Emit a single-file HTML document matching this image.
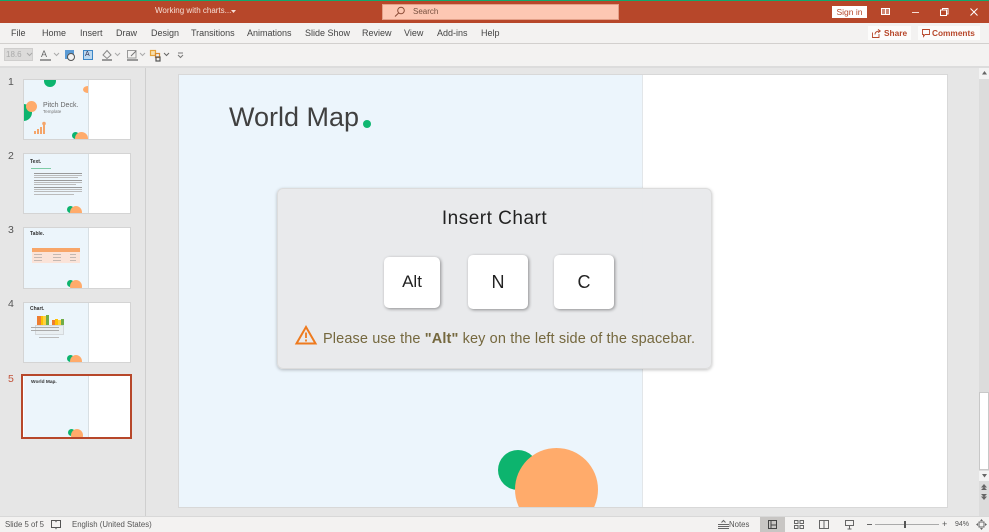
<!DOCTYPE html>
<html><head><meta charset="utf-8"><style>
*{box-sizing:border-box}
html,body{margin:0;padding:0}
body{width:989px;height:532px;position:relative;overflow:hidden;background:#e6e6e6;font-family:"Liberation Sans",sans-serif}
.a{position:absolute}
.t{position:absolute;white-space:nowrap;font-size:9px;color:#444;line-height:12px}
.thumb{position:absolute;left:23px;width:108px;background:#fff;border:1px solid #d4d4d4;overflow:hidden}
.thumb .bl{position:absolute;left:0;top:0;width:65px;height:100%;background:#ecf5fb;border-right:1px solid #d8dfe3;overflow:hidden}
.c{position:absolute;border-radius:50%}
.n{position:absolute;left:8px;font-size:10.5px;color:#555;line-height:12px}
.key{position:absolute;background:#fff;border-radius:5px;box-shadow:1px 1px 3px rgba(0,0,0,.4);text-align:center;color:#222;font-size:18px}
svg{position:absolute;overflow:visible}
</style></head><body>
<div class="a" style="left:0;top:0;width:989px;height:1px;background:#10a96c"></div>
<div class="a" style="left:0;top:1px;width:989px;height:22px;background:#b7472a"></div>
<div class="t" style="left:155px;top:5px;color:#f6ddd5;font-size:8px">Working with charts...</div>
<svg style="left:231px;top:10px" width="6" height="4"><path d="M0 0H5L2.500 3Z" fill="#f6ddd5"/></svg>
<div class="a" style="left:382px;top:4px;width:237px;height:16px;background:#fdc7b3;border:1px solid #e39f88"></div>
<svg style="left:394px;top:6px" width="12" height="12" fill="none" stroke="#8a4a35" stroke-width="1"><circle cx="7" cy="4.500" r="3.300"/><path d="M4.600 7L1 10.500"/></svg>
<div class="t" style="left:413px;top:6px;color:#77503f;font-size:8px">Search</div>
<div class="a" style="left:832px;top:6px;width:35px;height:12px;background:#fff;color:#b7472a;font-size:8.500px;line-height:12px;text-align:center">Sign in</div>
<svg style="left:881px;top:8px" width="10" height="8" fill="none" stroke="#fff"><rect x=".5" y=".5" width="8" height="6" fill="#fff" fill-opacity=".35"/><path d="M4.500 1V7" /></svg>
<div class="a" style="left:912px;top:12px;width:7px;height:1px;background:#f6ddd5"></div>
<svg style="left:940px;top:8px" width="9" height="8" fill="none" stroke="#fff"><rect x=".5" y="2" width="6" height="5.500"/><path d="M2.500 2V.5H8V6H6.500"/></svg>
<svg style="left:970px;top:8px" width="8" height="8" stroke="#fff"><path d="M.5 .5L7.500 7.500M7.500 .5L.5 7.500"/></svg>

<div class="a" style="left:0;top:23px;width:989px;height:44px;background:#f3f2f1"></div>
<div class="a" style="left:0;top:43px;width:989px;height:1px;background:#d2d0ce"></div>
<div class="a" style="left:0;top:66px;width:989px;height:2px;background:#dcdcdc"></div>
<div class="t" style="left:11px;top:27px">File</div>
<div class="t" style="left:42px;top:27px">Home</div>
<div class="t" style="left:80px;top:27px">Insert</div>
<div class="t" style="left:116px;top:27px">Draw</div>
<div class="t" style="left:151px;top:27px">Design</div>
<div class="t" style="left:191px;top:27px">Transitions</div>
<div class="t" style="left:247px;top:27px">Animations</div>
<div class="t" style="left:305px;top:27px">Slide Show</div>
<div class="t" style="left:362px;top:27px">Review</div>
<div class="t" style="left:404px;top:27px">View</div>
<div class="t" style="left:437px;top:27px">Add-ins</div>
<div class="t" style="left:481px;top:27px">Help</div>

<div class="a" style="left:868px;top:26px;width:43px;height:14px;background:#fcfcfb"></div>
<svg style="left:872px;top:29px" width="9" height="9" fill="none" stroke="#b7472a" stroke-width=".9"><path d="M.5 3.500V8.500H7V5M3 5.500C3 3 5 2 8 2M6 .3L8.300 2L6 3.800"/></svg>
<div class="t" style="left:884px;top:27px;color:#b7472a;font-weight:bold;font-size:8.300px">Share</div>
<div class="a" style="left:918px;top:26px;width:62px;height:14px;background:#fcfcfb"></div>
<svg style="left:922px;top:29px" width="9" height="9" fill="none" stroke="#b7472a" stroke-width=".9"><path d="M.5 .5H7.500V5.500H3L1.500 7.500V5.500H.5Z"/></svg>
<div class="t" style="left:932px;top:27px;color:#b7472a;font-weight:bold;font-size:8.300px">Comments</div>

<div class="a" style="left:4px;top:48px;width:29px;height:13px;background:#dcdbda;border:1px solid #cfcecd"></div>
<div class="t" style="left:6px;top:49px;color:#aaa;font-size:8px">18.6</div>
<svg style="left:27px;top:53px" width="5" height="3"><path d="M0 0L2.500 2.500L5 0" fill="none" stroke="#aaa"/></svg>
<div class="t" style="left:41px;top:48px;font-size:9px;color:#666">A</div>
<div class="a" style="left:40px;top:59px;width:11px;height:2px;background:#999"></div>
<svg style="left:54px;top:53px" width="5" height="3"><path d="M0 0L2.500 2.500L5 0" fill="none" stroke="#aaa"/></svg>
<div class="a" style="left:65px;top:50px;width:9px;height:9px;background:#5b9bd5"></div>
<div class="a" style="left:67px;top:53px;width:8px;height:8px;border-radius:50%;background:#f3f2f1;border:1px solid #555"></div>
<div class="a" style="left:83px;top:50px;width:10px;height:10px;background:#bcd8ef;border:1.500px solid #3c86c6"></div>
<div class="t" style="left:85px;top:49px;font-size:7px;color:#335">A</div>
<svg style="left:102px;top:50px" width="10" height="11"><path d="M5 .5L9 5L5 8.500L1 5Z" fill="none" stroke="#888"/><rect y="9" width="10" height="2" fill="#999"/></svg>
<svg style="left:115px;top:53px" width="5" height="3"><path d="M0 0L2.500 2.500L5 0" fill="none" stroke="#aaa"/></svg>
<svg style="left:127px;top:50px" width="11" height="11"><path d="M.5 .5H9V8H.5Z" fill="none" stroke="#999"/><path d="M4 6L9 1" stroke="#777"/><rect y="9" width="11" height="2" fill="#999"/></svg>
<svg style="left:140px;top:53px" width="5" height="3"><path d="M0 0L2.500 2.500L5 0" fill="none" stroke="#aaa"/></svg>
<svg style="left:150px;top:50px" width="11" height="11" fill="none" stroke-width="1.200"><rect x=".5" y=".5" width="5" height="5" stroke="#e5a33a" fill="#f7dfae"/><rect x="5.500" y="3.500" width="4" height="4" stroke="#d98a2c"/><rect x="6" y="7" width="4" height="4" stroke="#555"/></svg>
<svg style="left:164px;top:53px" width="5" height="3"><path d="M0 0L2.500 2.500L5 0" fill="none" stroke="#666"/></svg>
<svg style="left:178px;top:53px" width="5" height="5"><path d="M0 0H5M0 2L2.500 4.500L5 2" fill="none" stroke="#777"/></svg>

<div class="a" style="left:145px;top:68px;width:1px;height:448px;background:#cfcfcf"></div>

<div class="n" style="left:8px;top:76px">1</div>
<div class="thumb" style="top:79px;height:61px"><div class="bl">
<div class="c" style="left:20px;top:-5px;width:12px;height:12px;background:#0db46e"></div>
<div class="c" style="left:59px;top:6px;width:10px;height:7px;background:#ffab6b"></div>
<div class="c" style="left:-9px;top:24px;width:17px;height:17px;background:#0db46e"></div>
<div class="c" style="left:2px;top:21px;width:11px;height:11px;background:#ffab6b"></div>
<div class="t" style="left:19px;top:21px;font-size:7px;line-height:9px;color:#666">Pitch Deck.</div>
<div class="t" style="left:19px;top:29px;font-size:4.500px;line-height:6px;color:#777">Template</div>
<svg style="left:10px;top:42px" width="12" height="13" fill="#f4a56a"><rect y="9" width="2" height="3"/><rect x="3" y="7" width="2" height="5"/><rect x="6" y="5" width="2" height="7"/><rect x="9" y="3" width="2" height="9"/><circle cx="10" cy="1.500" r="1.800"/></svg>
<div class="c" style="left:48px;top:52px;width:7px;height:7px;background:#0db46e"></div>
<div class="c" style="left:51px;top:52px;width:13px;height:13px;background:#ffab6b"></div>
</div></div>

<div class="n" style="left:8px;top:150px">2</div>
<div class="thumb" style="top:153px;height:61px"><div class="bl">
<div class="t" style="left:6px;top:2px;font-size:5px;font-weight:bold;color:#333">Text.</div>
<div class="a" style="left:7px;top:14px;width:20px;height:1px;background:#7dcba6"></div>
<div class="a" style="left:10px;top:19px;width:48px;height:1px;background:#999"></div>
<div class="a" style="left:10px;top:21px;width:48px;height:1px;background:#bbb"></div>
<div class="a" style="left:10px;top:23px;width:44px;height:1px;background:#bbb"></div>
<div class="a" style="left:10px;top:26px;width:48px;height:1px;background:#999"></div>
<div class="a" style="left:10px;top:28px;width:48px;height:1px;background:#bbb"></div>
<div class="a" style="left:10px;top:30px;width:42px;height:1px;background:#bbb"></div>
<div class="a" style="left:10px;top:33px;width:48px;height:1px;background:#999"></div>
<div class="a" style="left:10px;top:35px;width:48px;height:1px;background:#bbb"></div>
<div class="a" style="left:10px;top:37px;width:48px;height:1px;background:#bbb"></div>
<div class="a" style="left:10px;top:40px;width:40px;height:1px;background:#bbb"></div>
<div class="c" style="left:43px;top:52px;width:7px;height:7px;background:#0db46e"></div>
<div class="c" style="left:46px;top:52px;width:12px;height:13px;background:#ffab6b"></div>
</div></div>

<div class="n" style="left:8px;top:224px">3</div>
<div class="thumb" style="top:227px;height:62px"><div class="bl">
<div class="t" style="left:6px;top:0;font-size:5px;font-weight:bold;color:#333">Table.</div>
<div class="a" style="left:8px;top:20px;width:48px;height:4px;background:#f8a669"></div>
<div class="a" style="left:8px;top:24px;width:48px;height:11px;background:#fbe3d8"></div>
<div class="a" style="left:10px;top:26px;width:8px;height:1px;background:#c4b8b2"></div>
<div class="a" style="left:10px;top:29px;width:8px;height:1px;background:#c4b8b2"></div>
<div class="a" style="left:10px;top:32px;width:8px;height:1px;background:#c4b8b2"></div>
<div class="a" style="left:29px;top:26px;width:8px;height:1px;background:#c4b8b2"></div>
<div class="a" style="left:29px;top:29px;width:8px;height:1px;background:#c4b8b2"></div>
<div class="a" style="left:29px;top:32px;width:8px;height:1px;background:#c4b8b2"></div>
<div class="a" style="left:46px;top:26px;width:6px;height:1px;background:#c4b8b2"></div>
<div class="a" style="left:46px;top:29px;width:6px;height:1px;background:#c4b8b2"></div>
<div class="a" style="left:46px;top:32px;width:6px;height:1px;background:#c4b8b2"></div>
<div class="c" style="left:43px;top:52px;width:7px;height:7px;background:#0db46e"></div>
<div class="c" style="left:46px;top:52px;width:12px;height:13px;background:#ffab6b"></div>
</div></div>

<div class="n" style="left:8px;top:298px">4</div>
<div class="thumb" style="top:302px;height:61px"><div class="bl">
<div class="t" style="left:6px;top:0;font-size:5px;font-weight:bold;color:#333">Chart.</div>
<div class="a" style="left:13px;top:13px;width:4px;height:9px;background:#ed7d31"></div>
<div class="a" style="left:17px;top:13px;width:2px;height:9px;background:#ffc000"></div>
<div class="a" style="left:19px;top:13px;width:3px;height:9px;background:#ffd23f"></div>
<div class="a" style="left:22px;top:12px;width:3px;height:10px;background:#70ad47"></div>
<div class="a" style="left:28px;top:17px;width:3px;height:5px;background:#ed7d31"></div>
<div class="a" style="left:31px;top:16px;width:3px;height:6px;background:#ffc000"></div>
<div class="a" style="left:34px;top:17px;width:3px;height:5px;background:#ffd23f"></div>
<div class="a" style="left:37px;top:16px;width:3px;height:6px;background:#70ad47"></div>
<div class="a" style="left:11px;top:22px;width:29px;height:10px;background:#e9eff2;border:1px solid #d5d9dc"></div>
<div class="a" style="left:7px;top:24px;width:28px;height:1px;background:#aaa"></div>
<div class="a" style="left:7px;top:27px;width:28px;height:1px;background:#aaa"></div>
<div class="a" style="left:15px;top:34px;width:20px;height:1px;background:#bbb"></div>
<div class="c" style="left:43px;top:52px;width:7px;height:7px;background:#0db46e"></div>
<div class="c" style="left:46px;top:52px;width:12px;height:13px;background:#ffab6b"></div>
</div></div>

<div class="n" style="left:8px;top:373px;color:#c2533a">5</div>
<div class="thumb" style="left:21px;top:374px;width:111px;height:65px;border:2px solid #b7472a"><div class="bl" style="left:1px;width:65px">
<div class="t" style="left:7px;top:1px;font-size:4.800px;font-weight:bold;color:#333">World Map.</div>
<div class="c" style="left:44px;top:53px;width:7px;height:7px;background:#0db46e"></div>
<div class="c" style="left:47px;top:53px;width:12px;height:13px;background:#ffab6b"></div>
</div></div>

<div class="a" style="left:178px;top:74px;width:770px;height:434px;background:#fff;border:1px solid #d8d8d8;overflow:hidden">
 <div class="a" style="left:0;top:0;width:464px;height:432px;background:#ecf5fc;border-right:1px solid #e2e6e9"></div>
 <div class="t" style="left:50px;top:24px;font-size:27px;line-height:36px;color:#404040">World Map</div>
 <div class="c" style="left:184px;top:45px;width:8px;height:8px;background:#0fb771"></div>
 <div class="c" style="left:319px;top:375px;width:40px;height:40px;background:#0db46e"></div>
 <div class="c" style="left:336px;top:373px;width:83px;height:83px;background:#ffab6b"></div>
</div>

<div class="a" style="left:277px;top:188px;width:435px;height:181px;background:rgba(232,233,235,.97);border:1px solid #dcdcdc;border-radius:6px;box-shadow:0 1px 3px rgba(0,0,0,.25)"></div>
<div class="t" style="left:277px;top:207px;width:435px;text-align:center;font-size:19px;line-height:24px;color:#222;letter-spacing:.5px">Insert Chart</div>
<div class="key" style="left:384px;top:257px;width:56px;height:51px;line-height:50px;font-size:17px">Alt</div>
<div class="key" style="left:468px;top:255px;width:60px;height:54px;line-height:54px">N</div>
<div class="key" style="left:554px;top:255px;width:60px;height:54px;line-height:54px">C</div>
<svg style="left:295px;top:325px" width="22" height="20" fill="none"><path d="M11 2L20.500 18.500H1.500Z" stroke="#ee7a1e" stroke-width="2"/><path d="M11 7.500V13M11 14.500V16.500" stroke="#ee7a1e" stroke-width="1.800"/></svg>
<div class="t" style="left:323px;top:331px;font-size:14.500px;line-height:17px;color:#75683e;letter-spacing:.12px">Please use the <b>"Alt"</b> key on the left side of the spacebar.</div>

<div class="a" style="left:979px;top:68px;width:10px;height:448px;background:#dcdcdc"></div>
<div class="a" style="left:979px;top:68px;width:10px;height:11px;background:#f3f3f3"></div>
<svg style="left:982px;top:71px" width="5" height="4"><path d="M0 3.500H5L2.500 0Z" fill="#666"/></svg>
<div class="a" style="left:979px;top:392px;width:10px;height:78px;background:#fff;border:1px solid #c8c8c8"></div>
<div class="a" style="left:979px;top:471px;width:10px;height:10px;background:#f3f3f3"></div>
<svg style="left:982px;top:474px" width="5" height="4"><path d="M0 0H5L2.500 3.500Z" fill="#666"/></svg>
<svg style="left:981px;top:484px" width="6" height="16" fill="#666"><path d="M0 3.500H6L3 0ZM0 6H6L3 3Z"/><path d="M0 10H6L3 13ZM0 12.500H6L3 16Z"/></svg>

<div class="a" style="left:0;top:516px;width:989px;height:16px;background:#f3f2f1;border-top:1px solid #d8d8d8"></div>
<div class="t" style="left:5px;top:519px;font-size:7.800px;color:#555">Slide 5 of 5</div>
<svg style="left:51px;top:520px" width="10" height="9" fill="none" stroke="#555"><path d="M.5 .5H4.500L5 1.500L5.500 .5H9.500V7.500H5.500L5 8.500L4.500 7.500H.5Z"/></svg>
<div class="t" style="left:72px;top:519px;font-size:7.800px;color:#555">English (United States)</div>
<svg style="left:718px;top:520px" width="11" height="9" stroke="#666" fill="none"><path d="M3.500 2.500L5.500 .5L7.500 2.500M0 4.500H11M0 6.500H11M0 8.500H11"/></svg>
<div class="t" style="left:729px;top:519px;font-size:7.800px;color:#555">Notes</div>
<div class="a" style="left:760px;top:517px;width:25px;height:15px;background:#c8c6c4"></div>
<svg style="left:768px;top:520px" width="9" height="9" fill="none" stroke="#444"><rect x=".5" y=".5" width="8" height="8"/><path d="M3 .5V8.500M3 5H8.500"/></svg>
<svg style="left:794px;top:520px" width="10" height="9" fill="none" stroke="#666"><rect x=".5" y=".5" width="3.500" height="3"/><rect x="6" y=".5" width="3.500" height="3"/><rect x=".5" y="5.500" width="3.500" height="3"/><rect x="6" y="5.500" width="3.500" height="3"/></svg>
<svg style="left:819px;top:520px" width="10" height="9" fill="none" stroke="#666"><path d="M.5 .5H9.500V8.500H.5ZM5 .5V8.500"/></svg>
<svg style="left:845px;top:520px" width="9" height="10" fill="none" stroke="#666"><path d="M.5 .5H8.500V5.500H.5ZM4.500 5.500V9M2.500 9H6.500"/></svg>
<div class="a" style="left:867px;top:524px;width:5px;height:1px;background:#666"></div>
<div class="a" style="left:875px;top:524px;width:64px;height:1px;background:#aaa"></div>
<div class="a" style="left:904px;top:521px;width:2px;height:7px;background:#555"></div>
<div class="t" style="left:942px;top:518px;font-size:9px;color:#555">+</div>
<div class="t" style="left:955px;top:519px;font-size:7px;color:#555">94%</div>
<svg style="left:976px;top:519px" width="11" height="11" fill="none" stroke="#666"><rect x="3" y="3" width="5" height="5"/><path d="M5.500 0L4 2H7ZM5.500 11L4 9H7ZM0 5.500L2 4V7ZM11 5.500L9 4V7Z" fill="#666" stroke="none"/></svg>
</body></html>
